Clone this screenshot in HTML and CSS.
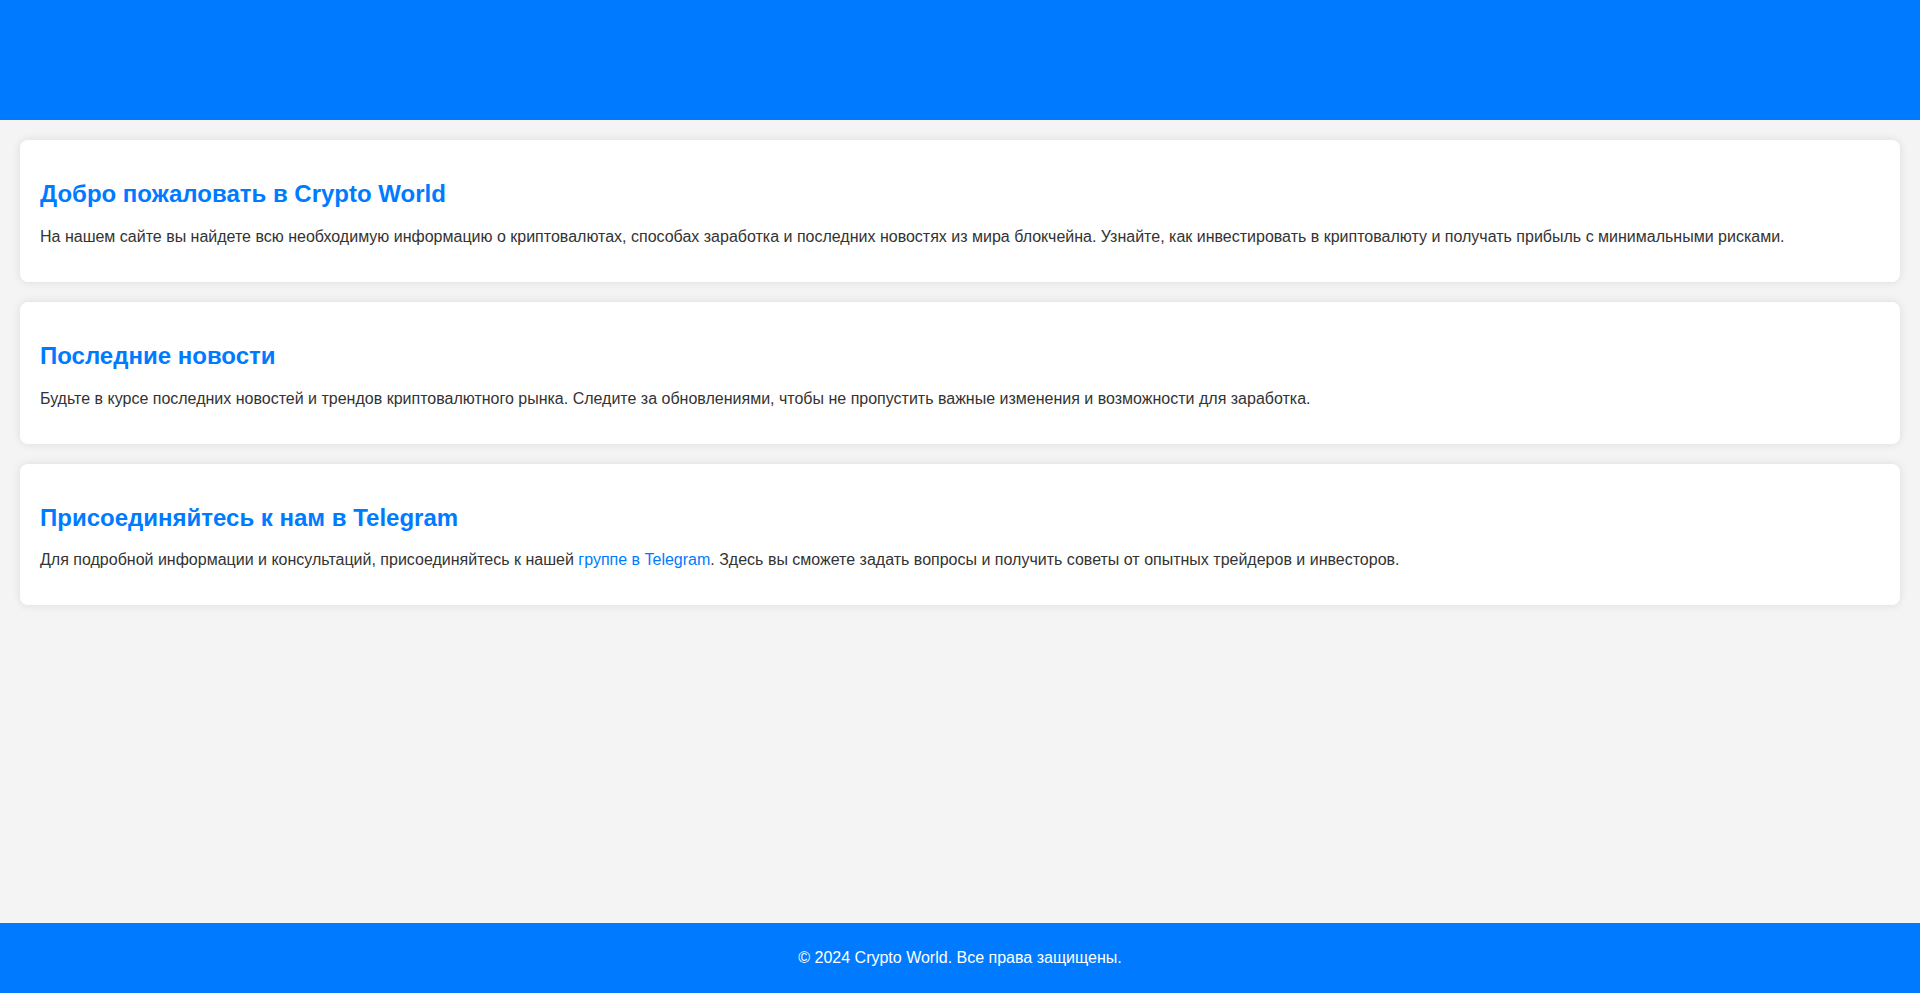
FILE: index.html
```html
<!DOCTYPE html>
<html lang="ru">
<head>
<meta charset="utf-8">
<title>Crypto World</title>
<link rel="stylesheet" href="styles.css">
</head>
<body>
<header class="site-header"></header>
<main class="content">
  <section class="card">
    <h2>Добро пожаловать в Crypto World</h2>
    <p>На нашем сайте вы найдете всю необходимую информацию о криптовалютах, способах заработка и последних новостях из мира блокчейна. Узнайте, как инвестировать в криптовалюту и получать прибыль с минимальными рисками.</p>
  </section>
  <section class="card">
    <h2>Последние новости</h2>
    <p>Будьте в курсе последних новостей и трендов криптовалютного рынка. Следите за обновлениями, чтобы не пропустить важные изменения и возможности для заработка.</p>
  </section>
  <section class="card">
    <h2>Присоединяйтесь к нам в Telegram</h2>
    <p>Для подробной информации и консультаций, присоединяйтесь к нашей <a href="#">группе в Telegram</a>. Здесь вы сможете задать вопросы и получить советы от опытных трейдеров и инвесторов.</p>
  </section>
</main>
<footer class="site-footer">
  <p>© 2024 Crypto World. Все права защищены.</p>
</footer>
</body>
</html>
```
FILE: styles.css
```css
html, body {
  margin: 0;
  padding: 0;
}
body {
  font-family: "Liberation Sans", Arial, sans-serif;
  background: #f4f4f4;
  color: #333;
  min-height: 100vh;
  display: flex;
  flex-direction: column;
}
.site-header {
  background: #007bff;
  height: 120px;
  flex-shrink: 0;
}
.content {
  flex: 1;
  padding: 20px;
  display: flex;
  flex-direction: column;
  gap: 20px;
}
.card {
  background: #fff;
  border-radius: 8px;
  box-shadow: 0 0 10px rgba(0, 0, 0, 0.1);
  padding: 20px;
}
.card h2 {
  color: #007bff;
  font-size: 24px;
  margin: 19.92px 0;
}
.card p {
  font-size: 16px;
  line-height: normal;
  margin: 16px 0;
}
.card a {
  color: #007bff;
  text-decoration: none;
}
.site-footer {
  background: #007bff;
  color: #fff;
  text-align: center;
  height: 70px;
  display: flex;
  align-items: center;
  justify-content: center;
  flex-shrink: 0;
}
.site-footer p {
  margin: 0;
  font-size: 16px;
}
```
